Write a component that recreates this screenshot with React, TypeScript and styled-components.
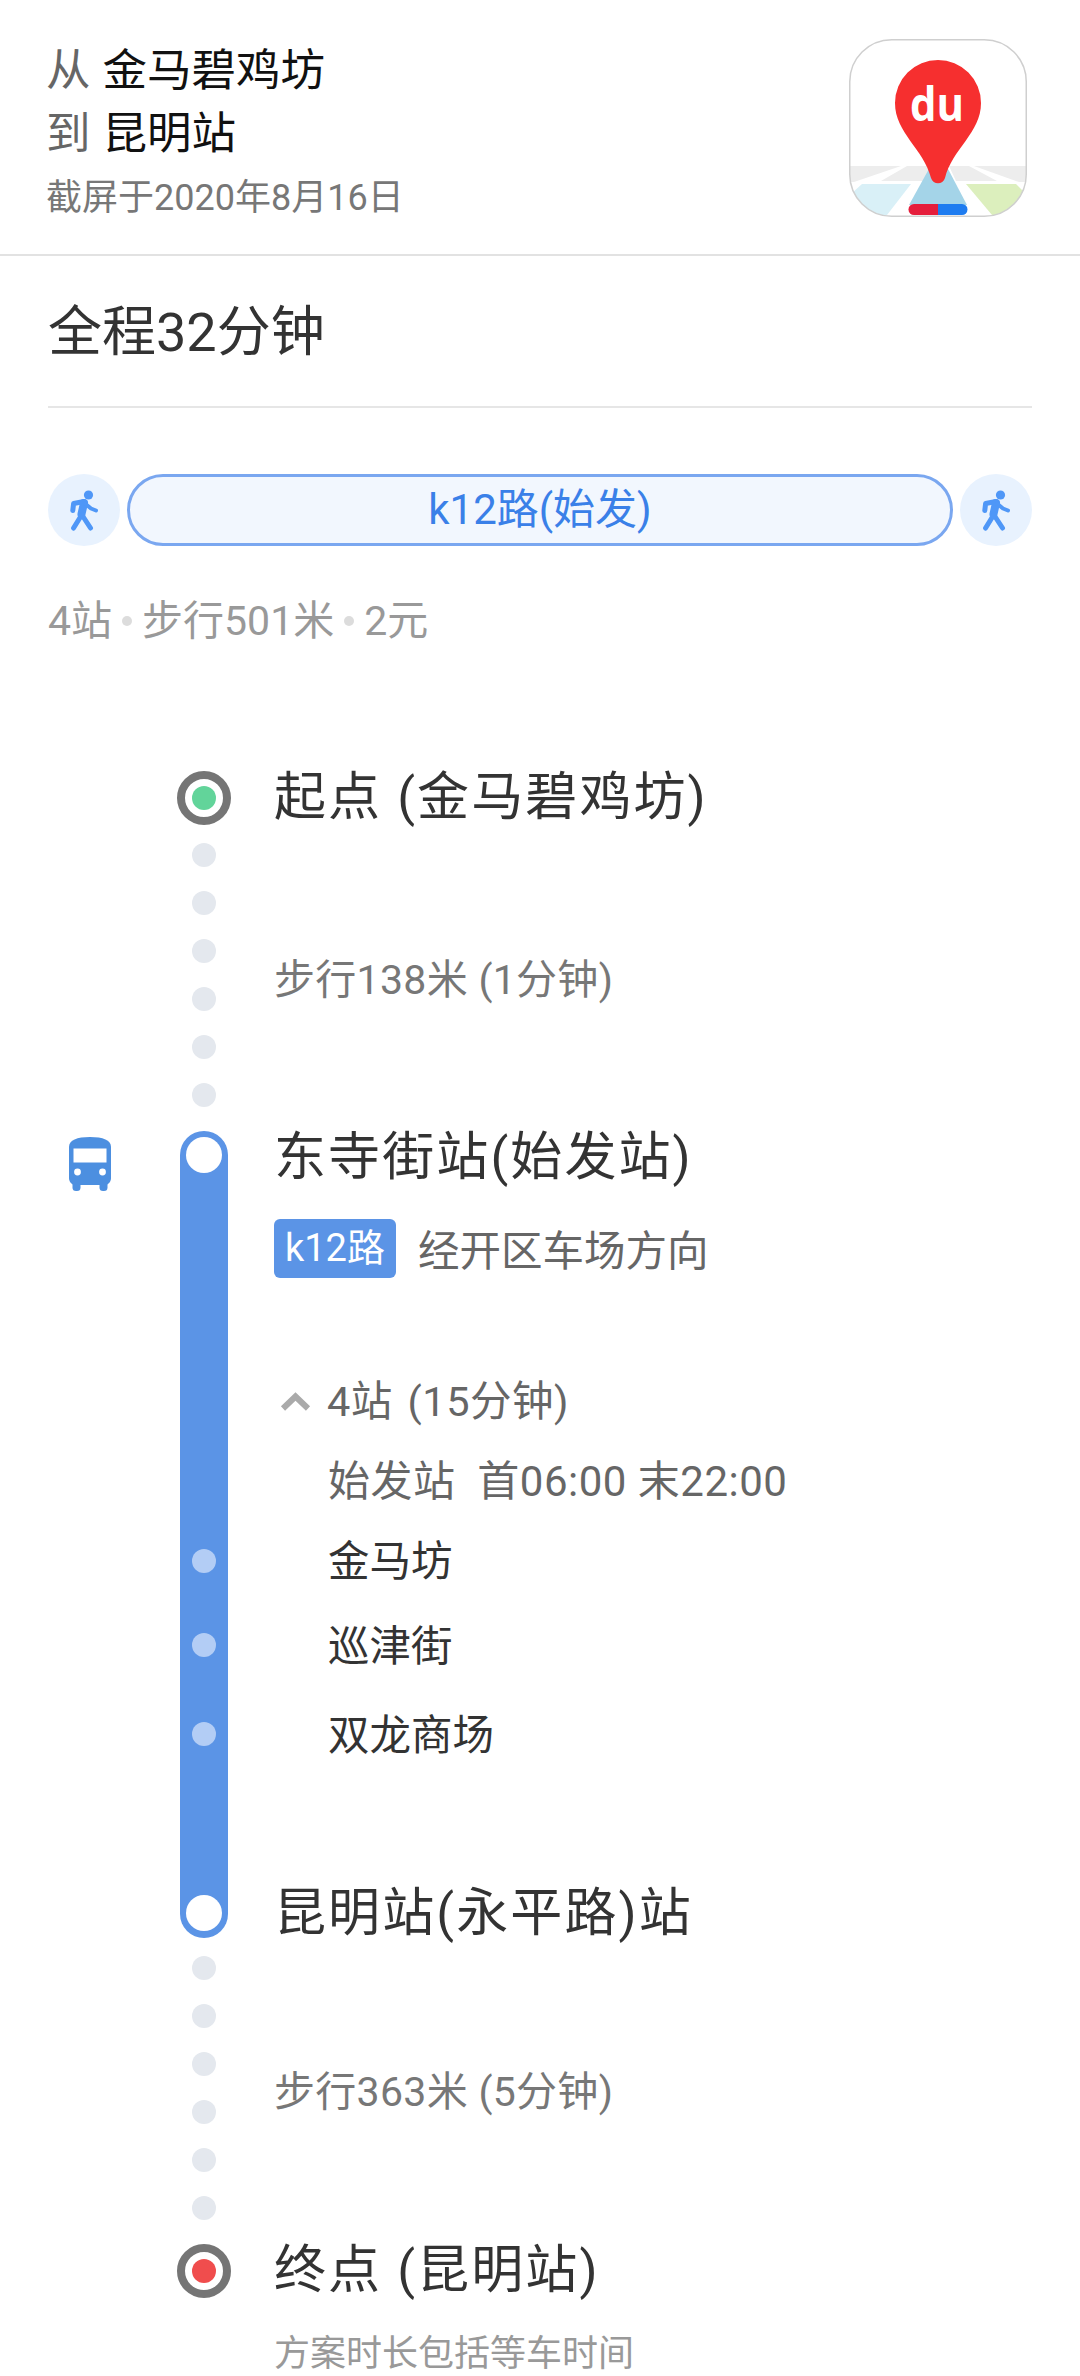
import React from 'react';
import styled, { createGlobalStyle } from 'styled-components';

const GlobalStyle = createGlobalStyle`
  html, body {
    margin: 0;
    padding: 0;
    width: 1080px;
    height: 2376px;
    overflow: hidden;
    background: #fff;
  }
  body {
    font-family: Roboto, "Noto Sans CJK SC", sans-serif;
  }
`;

const Page = styled.div`
  width: 1080px;
  height: 2376px;
  overflow: hidden;
  background: #fff;
`;

const Header = styled.header`
  height: 214px;
  border-bottom: 2px solid #e2e2e2;
  padding: 40px 53px 0 46px;
  display: flex;
  justify-content: space-between;
  align-items: flex-start;
`;

const HeaderText = styled.div`
  display: flex;
  flex-direction: column;
`;

const PlaceLine = styled.div`
  font-size: 44.5px;
  line-height: 63px;
  color: #111;
  white-space: nowrap;
`;

const PlaceLabel = styled.span`
  color: #666;
  margin-right: 12px;
`;

const ShotDate = styled.div`
  font-size: 36px;
  line-height: 64px;
  color: #777;
  white-space: nowrap;
`;

const AppIcon = styled.svg`
  width: 178px;
  height: 178px;
  flex: none;
  margin-top: -1px;
`;

const Summary = styled.section`
  padding: 0 48px;
`;

const Duration = styled.h1`
  margin: 47px 0 0;
  padding-bottom: 43px;
  border-bottom: 2px solid #e6e6e6;
  font-size: 54px;
  line-height: 60px;
  font-weight: 400;
  color: #333;
`;

const RouteRow = styled.div`
  margin-top: 66px;
  display: flex;
  align-items: center;
  justify-content: space-between;
`;

const WalkBadge = styled.div`
  width: 72px;
  height: 72px;
  border-radius: 50%;
  background: #e8f2fe;
  display: flex;
  align-items: center;
  justify-content: center;
`;

const RoutePill = styled.div`
  width: 826px;
  height: 72px;
  box-sizing: border-box;
  border: 3px solid #7aa7f0;
  border-radius: 36px;
  background: #f2f7fe;
  color: #3a80e8;
  font-size: 42px;
  line-height: 66px;
  text-align: center;
`;

const Meta = styled.div`
  margin-top: 51px;
  display: flex;
  align-items: center;
  font-size: 41px;
  line-height: 48px;
  color: #999;
`;

const MetaDot = styled.i`
  width: 10px;
  height: 10px;
  border-radius: 50%;
  background: #dcdcdc;
  margin: 0 10px;
`;

const Timeline = styled.div`
  margin-top: 126px;
  display: flex;
  flex-direction: column;
`;

const Segment = styled.div<{ $height: number }>`
  height: ${(p) => p.$height}px;
  display: grid;
  grid-template-columns: 150px 108px 1fr;
`;

const ModeCell = styled.div`
  padding: 6px 0 0 69px;
`;

const Rail = styled.div`
  display: flex;
  flex-direction: column;
  align-items: center;
`;

const Content = styled.div`
  padding-left: 16px;
  display: flex;
  flex-direction: column;
  align-items: flex-start;
`;

const EndNode = styled.div<{ $color: string }>`
  width: 54px;
  height: 54px;
  flex: none;
  box-sizing: border-box;
  border: 8px solid #757575;
  border-radius: 50%;
  background: #fff;
  display: flex;
  align-items: center;
  justify-content: center;
  &::after {
    content: '';
    width: 24px;
    height: 24px;
    border-radius: 50%;
    background: ${(p) => p.$color};
  }
`;

const WalkDots = styled.div`
  margin-top: 18px;
  display: flex;
  flex-direction: column;
  gap: 24px;
`;

const WalkDot = styled.i`
  display: block;
  width: 24px;
  height: 24px;
  border-radius: 50%;
  background: #e4e8ee;
`;

const Bar = styled.div`
  width: 48px;
  height: 807px;
  box-sizing: border-box;
  padding-top: 6px;
  border-radius: 24px;
  background: #5b94e6;
  display: flex;
  flex-direction: column;
  align-items: center;
`;

const Terminal = styled.i<{ $top: number }>`
  display: block;
  flex: none;
  margin-top: ${(p) => p.$top}px;
  width: 36px;
  height: 36px;
  border-radius: 50%;
  background: #fff;
`;

const BarStop = styled.i<{ $top: number }>`
  display: block;
  flex: none;
  margin-top: ${(p) => p.$top}px;
  width: 24px;
  height: 24px;
  border-radius: 50%;
  background: #b3cdf5;
`;

const StopTitle = styled.div<{ $top?: number }>`
  margin-top: ${(p) => p.$top ?? 0}px;
  font-size: 52px;
  line-height: 54px;
  letter-spacing: 2.1px;
  color: #333;
  white-space: nowrap;
`;

const WalkNote = styled.div<{ $top: number }>`
  margin-top: ${(p) => p.$top}px;
  font-size: 41px;
  line-height: 48px;
  letter-spacing: 0.3px;
  color: #777;
  white-space: nowrap;
`;

const LineRow = styled.div`
  margin-top: 33px;
  display: flex;
  align-items: center;
  gap: 22px;
`;

const LineTag = styled.span`
  height: 59px;
  width: 122px;
  border-radius: 6px;
  background: #5b94e6;
  color: #fff;
  font-size: 38px;
  line-height: 59px;
  text-align: center;
`;

const LineDirection = styled.span`
  font-size: 41.5px;
  color: #666;
  white-space: nowrap;
`;

const StopsToggle = styled.div`
  margin-top: 100px;
  padding-left: 6px;
  display: flex;
  align-items: center;
  gap: 16px;
  font-size: 41.5px;
  line-height: 48px;
  letter-spacing: 0.5px;
  word-spacing: 4px;
  color: #666;
`;

const StopsList = styled.div`
  padding-left: 54px;
  display: flex;
  flex-direction: column;
`;

const Hours = styled.div`
  margin-top: 32px;
  font-size: 42px;
  line-height: 48px;
  letter-spacing: 0.5px;
  color: #666;
  white-space: nowrap;
`;

const StopName = styled.div<{ $top: number }>`
  margin-top: ${(p) => p.$top}px;
  font-size: 41.5px;
  line-height: 48px;
  color: #333;
`;

const PlanNote = styled.div`
  margin-top: 32px;
  font-size: 36px;
  line-height: 48px;
  color: #999;
  white-space: nowrap;
`;

function WalkIcon() {
  return (
    <svg width="28" height="41" viewBox="0 0 28 41" fill="none" stroke="#4f97f7" strokeLinecap="round" strokeLinejoin="round">
      <circle cx="18.5" cy="5" r="4.6" fill="#4f97f7" stroke="none" />
      <path d="M2.8 20.5L3.6 13.5L14 11.5" strokeWidth="5" />
      <path d="M14 13L11.5 24" strokeWidth="8" />
      <path d="M15 13.5L21 18.5L26 20.5" strokeWidth="4" />
      <path d="M11 26L3.6 38M12 25L20.5 38" strokeWidth="5" />
    </svg>
  );
}

function BusIcon() {
  return (
    <svg width="42" height="54" viewBox="0 0 42 54">
      <rect x="3.5" y="42" width="8" height="12" rx="3.5" fill="#4c8fe0" />
      <rect x="30.5" y="42" width="8" height="12" rx="3.5" fill="#4c8fe0" />
      <path d="M0 10C0 3 8 0 21 0S42 3 42 10V41C42 45 39 48 36 48H6C3 48 0 45 0 41Z" fill="#4c8fe0" />
      <rect x="4.5" y="11.5" width="33" height="14" fill="#fff" />
      <circle cx="8.5" cy="35" r="3.4" fill="#fff" />
      <circle cx="33.5" cy="35" r="3.4" fill="#fff" />
    </svg>
  );
}

function Chevron() {
  return (
    <svg width="31" height="20" viewBox="0 0 31 20" fill="none">
      <path d="M3 16.5L15.5 4.5L28 16.5" stroke="#aaa" strokeWidth="6" />
    </svg>
  );
}

function MapsLogo() {
  return (
    <AppIcon viewBox="0 0 178 178">
      <defs>
        <clipPath id="iconShape">
          <rect x="0.5" y="0.5" width="177" height="177" rx="42" />
        </clipPath>
      </defs>
      <g clipPath="url(#iconShape)">
        <rect width="178" height="178" fill="#fff" />
        <path d="M0 127H52L5 143H0Z M58 127H80L77 142H32Z M100 127H120L148 142H107Z M125 127H178V143H170Z" fill="#ededed" />
        <path d="M13 145H62L38 176H17L3 154Z" fill="#d9f0f7" />
        <path d="M117 145H167L176 154L165 176H143Z" fill="#dcefbd" />
        <path d="M81 128H98L118 166H60Z" fill="#a4d4e8" />
        <path d="M65 165H89V176H65A5.5 5.5 0 0 1 65 165Z" fill="#e51e3c" />
        <path d="M89 165H113A5.5 5.5 0 0 1 113 176H89Z" fill="#1e7cf0" />
        <path d="M89 21A43 43 0 0 1 132 64C132 94 103 110 96 139C94 146 84 146 82 139C75 110 46 94 46 64A43 43 0 0 1 89 21Z" fill="#f62f2f" />
        <text x="88" y="82" textAnchor="middle" fontFamily="'Open Sans', sans-serif" fontWeight="700" fontSize="47" textLength="54" lengthAdjust="spacingAndGlyphs" fill="#fff">du</text>
      </g>
      <rect x="0.75" y="0.75" width="176.5" height="176.5" rx="42" fill="none" stroke="#cfcfcf" strokeWidth="1.5" />
    </AppIcon>
  );
}

const dots = [0, 1, 2, 3, 4, 5];

export default function App() {
  return (
    <Page>
      <GlobalStyle />
      <Header>
        <HeaderText>
          <PlaceLine>
            <PlaceLabel>从</PlaceLabel>金马碧鸡坊
          </PlaceLine>
          <PlaceLine>
            <PlaceLabel>到</PlaceLabel>昆明站
          </PlaceLine>
          <ShotDate>截屏于2020年8月16日</ShotDate>
        </HeaderText>
        <MapsLogo />
      </Header>

      <Summary>
        <Duration>全程32分钟</Duration>
        <RouteRow>
          <WalkBadge>
            <WalkIcon />
          </WalkBadge>
          <RoutePill>k12路(始发)</RoutePill>
          <WalkBadge>
            <WalkIcon />
          </WalkBadge>
        </RouteRow>
        <Meta>
          4站
          <MetaDot />
          步行501米
          <MetaDot />
          2元
        </Meta>
      </Summary>

      <Timeline>
        <Segment $height={360}>
          <ModeCell />
          <Rail>
            <EndNode $color="#62d49a" />
            <WalkDots>
              {dots.map((d) => (
                <WalkDot key={d} />
              ))}
            </WalkDots>
          </Rail>
          <Content>
            <StopTitle>起点 (金马碧鸡坊)</StopTitle>
            <WalkNote $top={131}>步行138米 (1分钟)</WalkNote>
          </Content>
        </Segment>

        <Segment $height={807}>
          <ModeCell>
            <BusIcon />
          </ModeCell>
          <Rail>
            <Bar>
              <Terminal $top={0} />
              <BarStop $top={376} />
              <BarStop $top={60} />
              <BarStop $top={65} />
              <Terminal $top={149} />
            </Bar>
          </Rail>
          <Content>
            <StopTitle>东寺街站(始发站)</StopTitle>
            <LineRow>
              <LineTag>k12路</LineTag>
              <LineDirection>经开区车场方向</LineDirection>
            </LineRow>
            <StopsToggle>
              <Chevron />
              4站 (15分钟)
            </StopsToggle>
            <StopsList>
              <Hours>始发站&nbsp; 首06:00 末22:00</Hours>
              <StopName $top={32}>金马坊</StopName>
              <StopName $top={37}>巡津街</StopName>
              <StopName $top={41}>双龙商场</StopName>
            </StopsList>
            <StopTitle $top={127}>昆明站(永平路)站</StopTitle>
          </Content>
        </Segment>

        <Segment $height={306}>
          <ModeCell />
          <Rail>
            <WalkDots>
              {dots.map((d) => (
                <WalkDot key={d} />
              ))}
            </WalkDots>
          </Rail>
          <Content>
            <WalkNote $top={130}>步行363米 (5分钟)</WalkNote>
          </Content>
        </Segment>

        <Segment $height={133}>
          <ModeCell />
          <Rail>
            <EndNode $color="#f04d4d" />
          </Rail>
          <Content>
            <StopTitle>终点 (昆明站)</StopTitle>
            <PlanNote>方案时长包括等车时间</PlanNote>
          </Content>
        </Segment>
      </Timeline>
    </Page>
  );
}
